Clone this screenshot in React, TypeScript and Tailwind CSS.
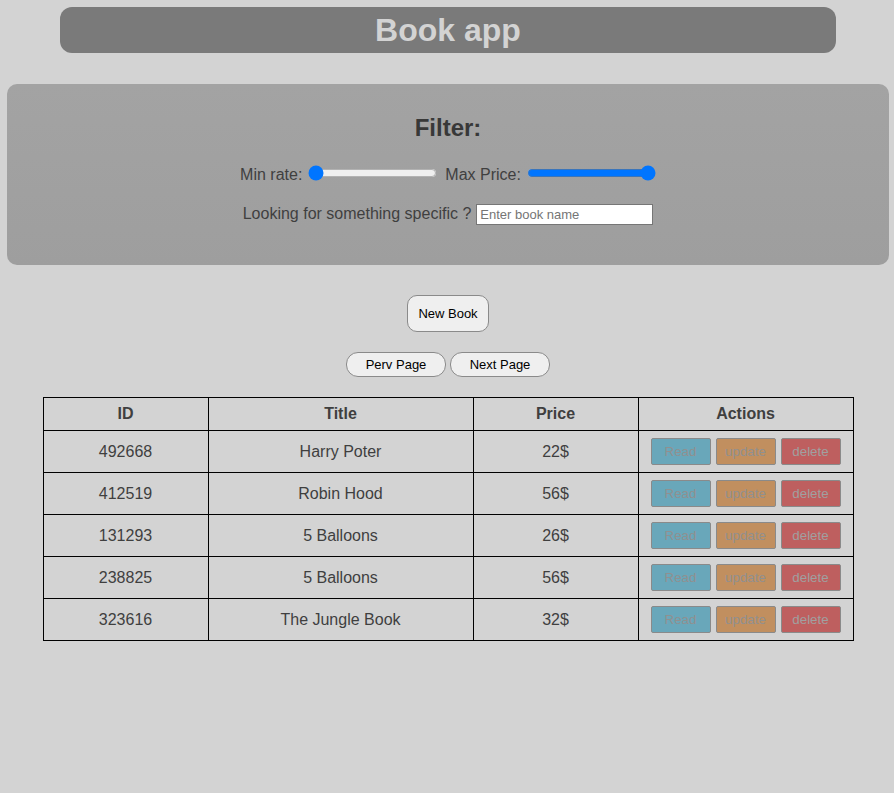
import React, { useState } from 'react';

interface Book {
  id: number;
  title: string;
  price: number;
}

const books: Book[] = [
  { id: 492668, title: 'Harry Poter', price: 22 },
  { id: 412519, title: 'Robin Hood', price: 56 },
  { id: 131293, title: '5 Balloons', price: 26 },
  { id: 238825, title: '5 Balloons', price: 56 },
  { id: 323616, title: 'The Jungle Book', price: 32 },
];

const App: React.FC = () => {
  const [minRate, setMinRate] = useState(0);
  const [maxPrice, setMaxPrice] = useState(100);
  const [search, setSearch] = useState('');

  return (
    <div className="min-h-[793px] bg-[#d3d3d3] pl-[2px] pt-[7px] font-['Liberation_Sans',Arial,sans-serif] text-[#3f3f3f]">
      <div className="mx-auto flex h-[46px] w-[776px] items-center justify-center rounded-[12px] bg-[#7a7a7a]">
        <h1 className="text-[32px] font-bold text-[#d3d3d3]">Book app</h1>
      </div>

      <div className="mx-[5px] mt-[31px] flex h-[181px] flex-col items-center rounded-[10px] bg-gradient-to-b from-[#a3a3a3] to-[#9e9e9e] pt-[30px]">
        <h2 className="text-[24px] font-bold leading-[28px] text-[#383838]">Filter:</h2>
        <div className="mt-[19px] flex items-center text-[16px] leading-[19px]">
          <label className="pt-[4px]">Min rate:</label>
          <input
            type="range"
            min={0}
            max={10}
            value={minRate}
            onChange={(e) => setMinRate(Number(e.target.value))}
            className="ml-[6px] mr-[8px] w-[129px]"
          />
          <label className="pt-[4px]">Max Price:</label>
          <input
            type="range"
            min={0}
            max={100}
            value={maxPrice}
            onChange={(e) => setMaxPrice(Number(e.target.value))}
            className="ml-[6px] w-[129px]"
          />
        </div>
        <div className="mt-[18px] flex items-center text-[16px]">
          <label>Looking for something specific ?</label>
          <input
            type="text"
            placeholder="Enter book name"
            value={search}
            onChange={(e) => setSearch(e.target.value)}
            className="ml-[5px] h-[21px] w-[177px] border border-[#767676] bg-white px-[3px] text-[13px] text-black placeholder:text-[#757575]"
          />
        </div>
      </div>

      <div className="mt-[30px] flex justify-center">
        <button className="h-[37px] w-[82px] rounded-[10px] border border-[#8a8a8a] bg-[#efefef] text-[13px] text-black">
          New Book
        </button>
      </div>

      <div className="mt-[20px] flex justify-center gap-[4px]">
        <button className="h-[25px] w-[100px] rounded-[12px] border border-[#8a8a8a] bg-[#efefef] text-[13px] text-black">
          Perv Page
        </button>
        <button className="h-[25px] w-[100px] rounded-[12px] border border-[#8a8a8a] bg-[#efefef] text-[13px] text-black">
          Next Page
        </button>
      </div>

      <table className="mx-auto mt-[20px] w-[811px] border-collapse text-[16px]">
        <thead>
          <tr className="h-[33px]">
            <th className="w-[165px] border border-black font-bold">ID</th>
            <th className="w-[265px] border border-black font-bold">Title</th>
            <th className="w-[165px] border border-black font-bold">Price</th>
            <th className="border border-black font-bold">Actions</th>
          </tr>
        </thead>
        <tbody>
          {books.map((b, i) => (
            <tr key={i} className="h-[42px]">
              <td className="border border-black text-center">{b.id}</td>
              <td className="border border-black text-center">{b.title}</td>
              <td className="border border-black text-center">{b.price}$</td>
              <td className="border border-black">
                <div className="flex justify-center gap-[5px]">
                  <button className="h-[27px] w-[60px] rounded-[2px] border border-[#8a8a8a] bg-[#69a7ba] text-[13.33px] text-[#909090]">
                    Read
                  </button>
                  <button className="h-[27px] w-[60px] rounded-[2px] border border-[#8a8a8a] bg-[#c18f5f] text-[13.33px] text-[#909090]">
                    update
                  </button>
                  <button className="h-[27px] w-[60px] rounded-[2px] border border-[#8a8a8a] bg-[#be5f5f] text-[13.33px] text-[#a0a0a0]">
                    delete
                  </button>
                </div>
              </td>
            </tr>
          ))}
        </tbody>
      </table>
    </div>
  );
};

export default App;
